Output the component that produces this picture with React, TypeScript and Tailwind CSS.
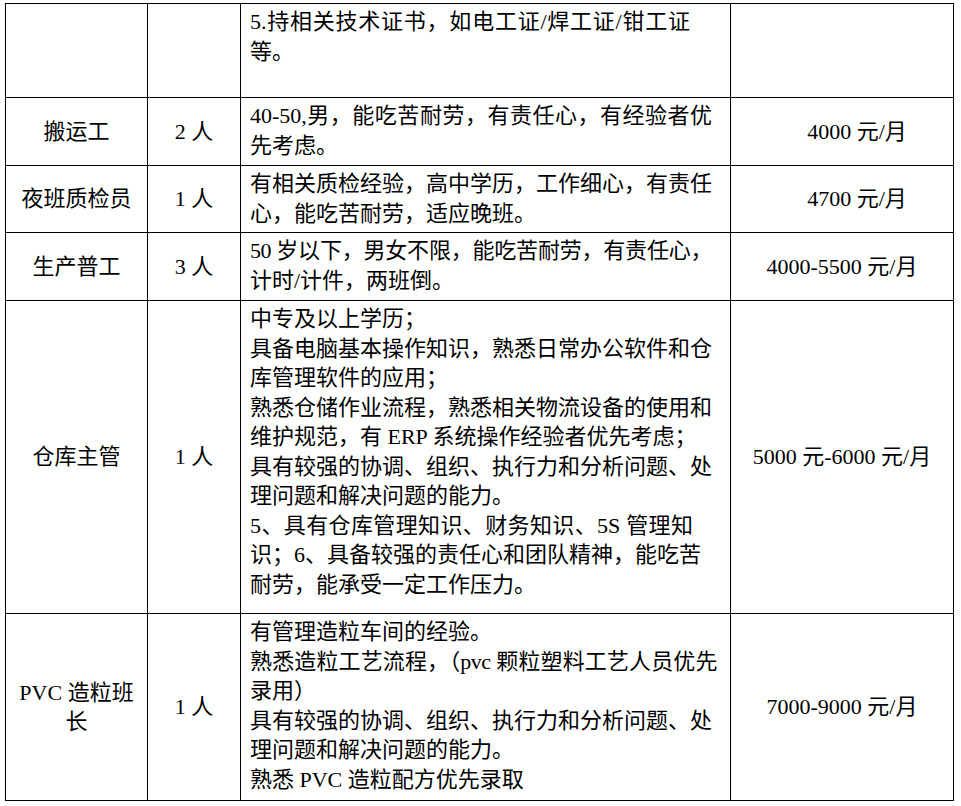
type Line = { t: string; w?: number; tight?: boolean }

const L = (t: string): Line => ({ t })
const J = (t: string, w = 462, tight = false): Line => ({ t, w, tight })

type Row = {
  name: React.ReactNode
  count: string
  lines: Line[]
  pay: string
  payShift?: boolean
  h: string
}

const rows: Row[] = [
  {
    name: '',
    count: '',
    lines: [J('5.持相关技术证书，如电工证/焊工证/钳工证', 440), L('等。')],
    pay: '',
    h: 'h-[94px]',
  },
  {
    name: '搬运工',
    count: '2 人',
    lines: [J('40-50,男，能吃苦耐劳，有责任心，有经验者优'), L('先考虑。')],
    pay: '4000 元/月',
    payShift: true,
    h: 'h-[68px]',
  },
  {
    name: '夜班质检员',
    count: '1 人',
    lines: [J('有相关质检经验，高中学历，工作细心，有责任'), L('心，能吃苦耐劳，适应晚班。')],
    pay: '4700 元/月',
    payShift: true,
    h: 'h-[67px]',
  },
  {
    name: '生产普工',
    count: '3 人',
    lines: [J('50 岁以下，男女不限，能吃苦耐劳，有责任心，', 462, true), L('计时/计件，两班倒。')],
    pay: '4000-5500 元/月',
    h: 'h-[68px]',
  },
  {
    name: '仓库主管',
    count: '1 人',
    lines: [
      L('中专及以上学历；'),
      J('具备电脑基本操作知识，熟悉日常办公软件和仓'),
      L('库管理软件的应用；'),
      J('熟悉仓储作业流程，熟悉相关物流设备的使用和'),
      L('维护规范，有 ERP 系统操作经验者优先考虑；'),
      J('具有较强的协调、组织、执行力和分析问题、处'),
      L('理问题和解决问题的能力。'),
      J('5、具有仓库管理知识、财务知识、5S 管理知', 443),
      J('识；6、具备较强的责任心和团队精神，能吃苦', 445),
      L('耐劳，能承受一定工作压力。'),
    ],
    pay: '5000 元-6000 元/月',
    h: 'h-[313px]',
  },
  {
    name: (
      <>
        PVC 造粒班
        <br />长
      </>
    ),
    count: '1 人',
    lines: [
      L('有管理造粒车间的经验。'),
      J('熟悉造粒工艺流程，（pvc 颗粒塑料工艺人员优先', 467, true),
      L('录用）'),
      J('具有较强的协调、组织、执行力和分析问题、处'),
      L('理问题和解决问题的能力。'),
      L('熟悉 PVC 造粒配方优先录取'),
    ],
    pay: '7000-9000 元/月',
    h: 'h-[187px]',
  },
]

export default function App() {
  return (
    <div className="min-h-screen w-[961px] h-[806px] bg-white pt-[3px] pl-[5px] text-black font-['Liberation_Serif','Noto_Sans_CJK_SC',serif] text-[22px] leading-[29.5px]">
      <table className="border-collapse table-fixed w-[948px]">
        <colgroup>
          <col className="w-[142px]" />
          <col className="w-[93px]" />
          <col className="w-[490px]" />
          <col className="w-[223px]" />
        </colgroup>
        <tbody>
          {rows.map((r, i) => (
            <tr key={i} className={r.h}>
              <td className="border border-black text-center align-middle p-0">{r.name}</td>
              <td className="border border-black text-center align-middle p-0">{r.count}</td>
              <td className="border border-black align-top pt-[3px] pl-[9px] pr-0 pb-0">
                {r.lines.map((l, k) =>
                  l.w ? (
                    <div
                      key={k}
                      className={`whitespace-nowrap text-justify [text-align-last:justify] ${l.tight ? 'tracking-[-0.5px]' : ''} ${l.w === 462 ? 'w-[462px]' : l.w === 440 ? 'w-[440px]' : l.w === 443 ? 'w-[443px]' : l.w === 445 ? 'w-[445px]' : 'w-[467px]'}`}
                    >
                      {l.t}
                    </div>
                  ) : (
                    <div key={k} className="whitespace-nowrap">
                      {l.t}
                    </div>
                  ),
                )}
              </td>
              <td className={`border border-black text-center align-middle p-0 ${r.payShift ? 'pl-[30px]' : ''}`}>
                {r.pay}
              </td>
            </tr>
          ))}
        </tbody>
      </table>
    </div>
  )
}
